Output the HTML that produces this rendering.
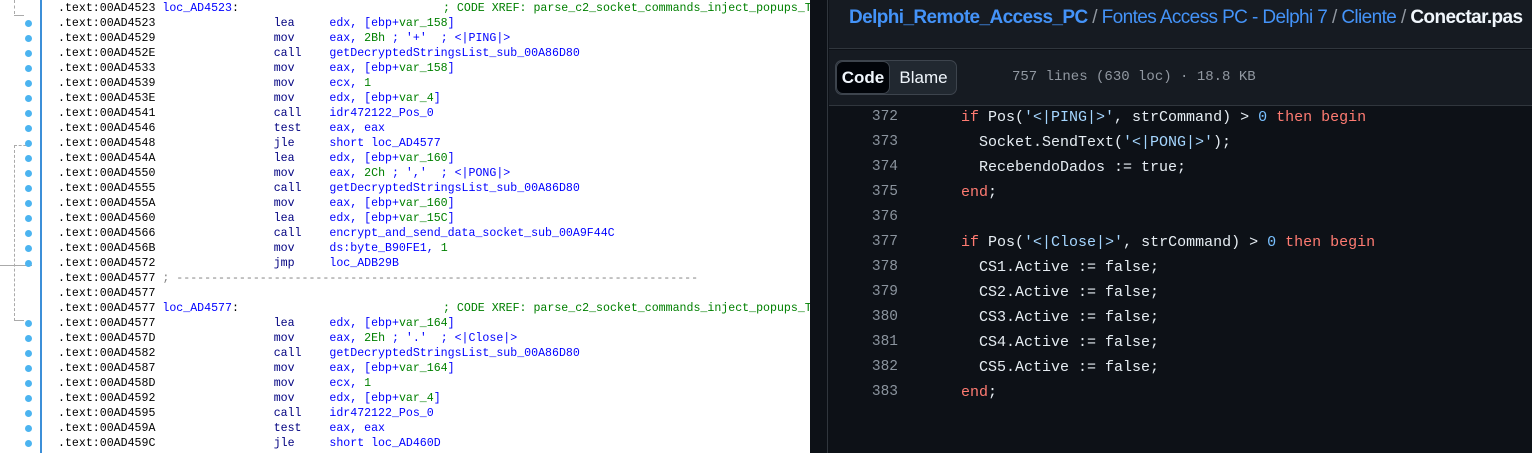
<!DOCTYPE html><html><head><meta charset="utf-8"><style>
*{margin:0;padding:0;box-sizing:border-box}
body{width:1532px;height:453px;overflow:hidden;background:#fff;position:relative;font-family:"Liberation Mono",monospace}
#ida{position:absolute;left:0;top:0;width:810px;height:453px;background:#fff;overflow:hidden}
.r{position:absolute;left:58px;height:15px;line-height:15px;font-size:11.6px;white-space:pre;color:#000}
.m{color:#000080}.o{color:#0000ff}.g{color:#008000}.c{color:#008000}.d{color:#808080}
.dot{position:absolute;left:25px;width:7px;height:7px;border-radius:50%;background:#4cb4f0}
#dark{position:absolute;left:810px;top:0;width:722px;height:453px;background:#0d1117}
#strip{position:absolute;left:810px;top:0;width:18px;height:453px;background:#0d1117;border-right:1px solid #30363d}
#hdr{position:absolute;left:829px;top:0;width:703px;height:49px;background:#161b22;border-bottom:1px solid #30363d}
#tb{position:absolute;left:829px;top:50px;width:703px;height:56px;background:#161b22;border-bottom:1px solid #30363d}
.bc{position:absolute;left:849px;top:7px;font-family:"Liberation Sans",sans-serif;font-size:19px;color:#4493f8;white-space:nowrap;letter-spacing:-0.6px}
.ln{position:absolute;left:829px;width:69px;text-align:right;font-size:14.5px;color:#8b949e;line-height:25px;height:25px}
.cd{position:absolute;left:961px;font-size:15px;color:#e6edf3;white-space:pre;line-height:25px;height:25px}
.k{color:#ff7b72}.s{color:#a5d6ff}.n{color:#79c0ff}
</style></head><body>
<div id="ida">
<div style="position:absolute;left:40px;top:0;width:2px;height:453px;background:#3c8fd8"></div>
<div style="position:absolute;left:14px;top:0;height:14px;border-left:1px dashed #aaa"></div>
<div style="position:absolute;left:14px;top:15px;width:10px;border-top:1px solid #aaa"></div>
<div style="position:absolute;left:14px;top:145px;height:176px;border-left:1px dashed #aaa"></div>
<div style="position:absolute;left:14px;top:145px;width:17px;border-top:1px dashed #aaa"></div>
<div style="position:absolute;left:14px;top:320px;width:10px;border-top:1px solid #aaa"></div>
<div style="position:absolute;left:0;top:265px;width:32px;border-top:1px solid #aaa"></div>
<div id="rows"></div>
</div>
<div id="dark"></div><div id="strip"></div>
<div id="hdr"></div><div id="tb"></div>
<div class="bc"><b>Delphi_Remote_Access_PC</b><span style="color:#9198a1"> / </span>Fontes Access PC - Delphi 7<span style="color:#9198a1"> / </span>Cliente<span style="color:#9198a1"> / </span><b style="color:#f0f6fc">Conectar.pas</b></div>
<div style="position:absolute;left:835px;top:60px;width:122px;height:35px;border:1px solid #3d444d;border-radius:7px;background:#212830"></div>
<div style="position:absolute;left:836px;top:61px;width:54px;height:33px;border:1px solid #3d444d;border-radius:7px;background:#010409;color:#f0f6fc;font-family:'Liberation Sans',sans-serif;font-weight:bold;font-size:17px;line-height:31px;text-align:center">Code</div>
<div style="position:absolute;left:890px;top:61px;width:67px;height:33px;color:#f0f6fc;font-family:'Liberation Sans',sans-serif;font-size:17px;line-height:33px;text-align:center">Blame</div>
<div style="position:absolute;left:1012px;top:66px;font-size:14px;color:#9198a1;line-height:22px">757 lines (630 loc) · 18.8 KB</div>
<div id="code"></div>
<script>
var R=[
['00AD4523','','','','<span class="o">loc_AD4523</span>:',0],
['00AD4523','lea','edx, [ebp+<span class="g">var_158</span>]',1],
['00AD4529','mov','eax, <span class="g">2Bh</span> ; \'+\'  ; &lt;|PING|&gt;',1],
['00AD452E','call','getDecryptedStringsList_sub_00A86D80',1],
['00AD4533','mov','eax, [ebp+<span class="g">var_158</span>]',1],
['00AD4539','mov','ecx, <span class="g">1</span>',1],
['00AD453E','mov','edx, [ebp+<span class="g">var_4</span>]',1],
['00AD4541','call','idr472122_Pos_0',1],
['00AD4546','test','eax, eax',1],
['00AD4548','jle','short loc_AD4577',1],
['00AD454A','lea','edx, [ebp+<span class="g">var_160</span>]',1],
['00AD4550','mov','eax, <span class="g">2Ch</span> ; \',\'  ; &lt;|PONG|&gt;',1],
['00AD4555','call','getDecryptedStringsList_sub_00A86D80',1],
['00AD455A','mov','eax, [ebp+<span class="g">var_160</span>]',1],
['00AD4560','lea','edx, [ebp+<span class="g">var_15C</span>]',1],
['00AD4566','call','encrypt_and_send_data_socket_sub_00A9F44C',1],
['00AD456B','mov','ds:byte_B90FE1, <span class="g">1</span>',1],
['00AD4572','jmp','loc_ADB29B',1],
['00AD4577','','','','<span class="d">; '+'-'.repeat(75)+'</span>',0],
['00AD4577','','','','',0],
['00AD4577','','','','<span class="o">loc_AD4577</span>:',0],
['00AD4577','lea','edx, [ebp+<span class="g">var_164</span>]',1],
['00AD457D','mov','eax, <span class="g">2Eh</span> ; \'.\'  ; &lt;|Close|&gt;',1],
['00AD4582','call','getDecryptedStringsList_sub_00A86D80',1],
['00AD4587','mov','eax, [ebp+<span class="g">var_164</span>]',1],
['00AD458D','mov','ecx, <span class="g">1</span>',1],
['00AD4592','mov','edx, [ebp+<span class="g">var_4</span>]',1],
['00AD4595','call','idr472122_Pos_0',1],
['00AD459A','test','eax, eax',1],
['00AD459C','jle','short loc_AD460D',1]];
var h='';
R.forEach(function(r,i){var y=1+15*i;var t='.text:'+r[0];
if(r.length==4){t+='                 '+'<span class="m">'+(r[1]+'        ').slice(0,8)+'</span><span class="o">'+r[2]+'</span>';}
else{t+=' '+r[4];}
h+='<div class="r" style="top:'+y+'px">'+t+'</div>';
if(r[r.length-1])h+='<div class="dot" style="top:'+(y+4)+'px"></div>';
if(i==0||i==20)h+='<div class="r c" style="left:443px;top:'+y+'px">; CODE XREF: parse_c2_socket_commands_inject_popups_T</div>';});
document.getElementById('rows').innerHTML=h;
var C=[
['372','<span class="k">if</span> Pos(<span class="s">\'&lt;|PING|&gt;\'</span>, strCommand) &gt; <span class="n">0</span> <span class="k">then begin</span>'],
['373','  Socket.SendText(<span class="s">\'&lt;|PONG|&gt;\'</span>);'],
['374','  RecebendoDados := true;'],
['375','<span class="k">end</span>;'],
['376',''],
['377','<span class="k">if</span> Pos(<span class="s">\'&lt;|Close|&gt;\'</span>, strCommand) &gt; <span class="n">0</span> <span class="k">then begin</span>'],
['378','  CS1.Active := false;'],['379','  CS2.Active := false;'],['380','  CS3.Active := false;'],
['381','  CS4.Active := false;'],['382','  CS5.Active := false;'],['383','<span class="k">end</span>;']];
var c='';C.forEach(function(r,i){var y=105+25*i;c+='<div class="ln" style="top:'+y+'px">'+r[0]+'</div><div class="cd" style="top:'+y+'px">'+r[1]+'</div>';});
document.getElementById('code').innerHTML=c;
</script>
</body></html>
